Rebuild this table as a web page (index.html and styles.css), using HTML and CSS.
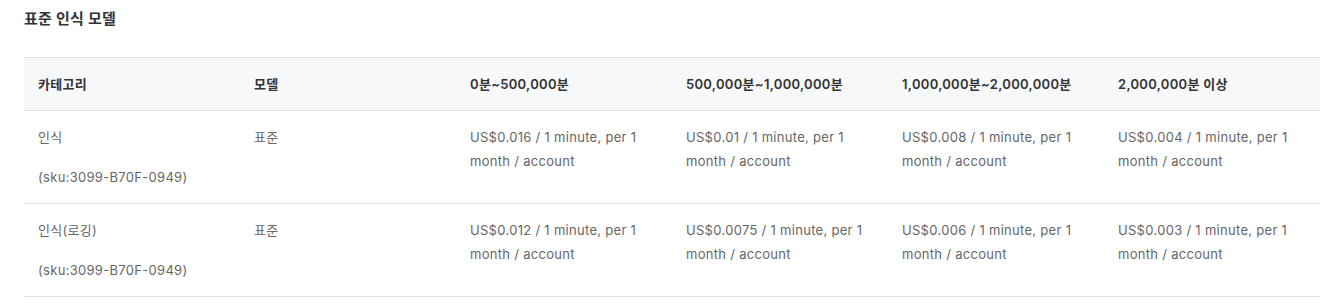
FILE: index.html
```html
<!DOCTYPE html>
<html lang="ko">
<head>
  <meta charset="UTF-8">
  <title>표준 인식 모델</title>
  <link rel="stylesheet" href="styles.css">
</head>
<body>

  <section class="price-section">
    <h3 class="section-title">표준 인식 모델</h3>

    <table class="price-table">
      <thead>
        <tr>
          <th>카테고리</th>
          <th>모델</th>
          <th>0분~500,000분</th>
          <th>500,000분~1,000,000분</th>
          <th>1,000,000분~2,000,000분</th>
          <th>2,000,000분 이상</th>
        </tr>
      </thead>
      <tbody>
        <tr>
          <td><p>인식</p><p>(sku:3099-B70F-0949)</p></td>
          <td>표준</td>
          <td>US$0.016 / 1 minute, per 1 month / account</td>
          <td>US$0.01 / 1 minute, per 1 month / account</td>
          <td>US$0.008 / 1 minute, per 1 month / account</td>
          <td>US$0.004 / 1 minute, per 1 month / account</td>
        </tr>
        <tr>
          <td><p>인식(로깅)</p><p>(sku:3099-B70F-0949)</p></td>
          <td>표준</td>
          <td>US$0.012 / 1 minute, per 1 month / account</td>
          <td>US$0.0075 / 1 minute, per 1 month / account</td>
          <td>US$0.006 / 1 minute, per 1 month / account</td>
          <td>US$0.003 / 1 minute, per 1 month / account</td>
        </tr>
      </tbody>
    </table>
  </section>

</body>
</html>
```

FILE: styles.css
```css
* {
  box-sizing: border-box;
}

body {
  margin: 0;
  padding: 8px 9px 0 24px;
  font-family: Inter, 'Noto Sans CJK KR', sans-serif;
  font-size: 13px;
  color: #333;
  background: #fff;
}

.section-title {
  margin: 0;
  font-size: 15px;
  line-height: 22px;
  font-weight: 600;
  letter-spacing: 0.2px;
  color: #333;
}

.price-table {
  width: 100%;
  margin-top: 27px;
  border-collapse: collapse;
  table-layout: fixed;
}

.price-table th,
.price-table td {
  text-align: left;
  vertical-align: top;
  padding: 14px;
  line-height: 24px;
  letter-spacing: 0.3px;
  border-top: 1px solid #dedede;
  border-bottom: 1px solid #dedede;
}

.price-table th {
  background-color: #f7f8fa;
  font-weight: 600;
  color: #333;
}

.price-table td {
  color: #666;
}

.price-table td p {
  margin: 0;
}

.price-table td p + p {
  margin-top: 16px;
}
```
